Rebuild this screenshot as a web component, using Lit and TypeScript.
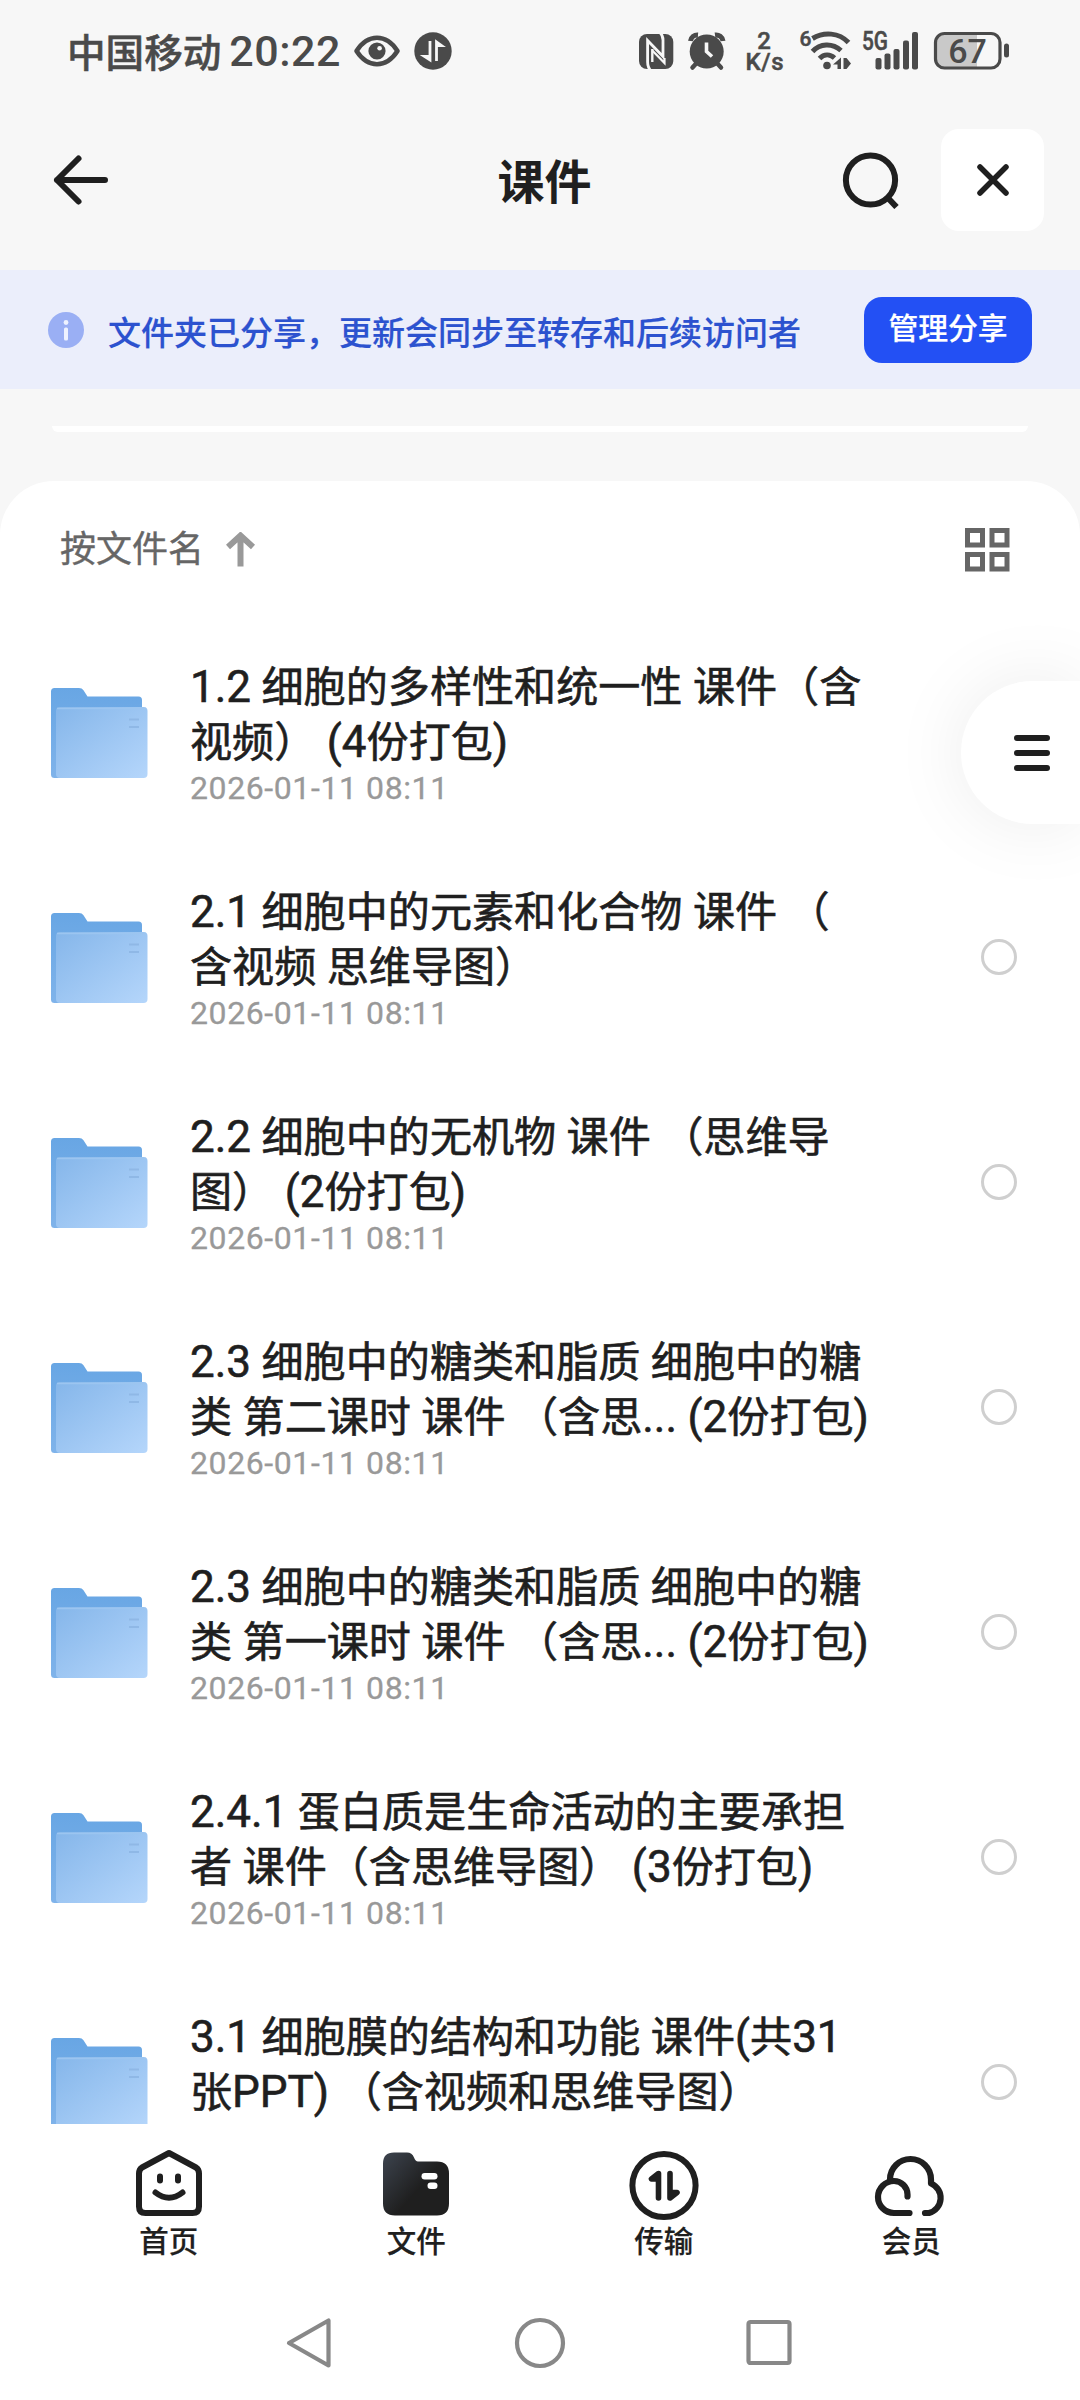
import { LitElement, html, svg, css } from "lit";
import { customElement, property } from "lit/decorators.js";

type Part = { t: string; latin?: boolean };
type FileItem = { lines: string[]; date?: string };

/** Splits a line so that runs of Latin letters and digits get their own size. */
function split(line: string): Part[] {
  return (line.match(/[\x21-\x7e]+|[^\x21-\x7e]+/g) ?? []).map((t) => ({
    t,
    latin: /[\x21-\x7e]/.test(t),
  }));
}

const day = "2026-01-11 08:11";
const files: FileItem[] = [
  { lines: ["1.2 细胞的多样性和统一性 课件（含", "视频） (4份打包)"], date: day },
  { lines: ["2.1 细胞中的元素和化合物 课件 （", "含视频 思维导图）"], date: day },
  { lines: ["2.2 细胞中的无机物 课件 （思维导", "图） (2份打包)"], date: day },
  { lines: ["2.3 细胞中的糖类和脂质 细胞中的糖", "类 第二课时 课件 （含思... (2份打包)"], date: day },
  { lines: ["2.3 细胞中的糖类和脂质 细胞中的糖", "类 第一课时 课件 （含思... (2份打包)"], date: day },
  { lines: ["2.4.1 蛋白质是生命活动的主要承担", "者 课件（含思维导图） (3份打包)"], date: day },
  { lines: ["3.1 细胞膜的结构和功能 课件(共31", "张PPT) （含视频和思维导图）"] },
];

const fontStack = css`Roboto, "Noto Sans CJK SC", sans-serif`;

@customElement("status-bar")
export class StatusBar extends LitElement {
  static styles = css`
    :host { display: flex; height: 102px; padding: 0 70px 0 67px; align-items: center; justify-content: space-between; color: #4a4a4a; font-family: ${fontStack}; box-sizing: border-box; }
    .side { display: flex; align-items: center; }
    svg { display: block; overflow: visible; }
    .carrier { font-size: 38.6px; font-weight: 500; line-height: 44px; font-family: "Noto Sans CJK SC", sans-serif; -webkit-text-stroke: 0.500px #4a4a4a; padding-bottom: 3px; }
    .clock { font-size: 43px; font-weight: 500; line-height: 44px; margin-left: 8px; letter-spacing: 0.5px; width: 125px; }
    .badge { margin-left: 14px; }
    text { font-family: ${fontStack}; fill: #4a4a4a; font-weight: 500; }
    .small { stroke: #4a4a4a; stroke-width: 0.500px; }
  `;
  render() {
    return html`
      <div class="side">
        <span class="carrier">中国移动</span>
        <span class="clock">20:22</span>
        <svg width="46" height="32" viewBox="0 0 46 32">
          <path d="M2.5 16C9 6 16 2.8 23 2.8S37 6 43.500 16C37 26 30 29.200 23 29.200S9 26 2.500 16Z" fill="none" stroke="#4a4a4a" stroke-width="4.600" stroke-linejoin="round"/>
          <circle cx="23" cy="16" r="8.600" fill="#4a4a4a"/><circle cx="25.600" cy="13.200" r="2.300" fill="#f7f7f7"/>
        </svg>
        <svg class="badge" width="38" height="38" viewBox="0 0 38 38">
          <circle cx="19" cy="19" r="18.700" fill="#4a4a4a"/>
          <path d="M16 9V28L10.500 24.500H16M22.500 29V10L27.500 13.500H22.500" fill="none" stroke="#f7f7f7" stroke-width="2.800"/>
        </svg>
      </div>
      <svg width="372" height="72" viewBox="638 15 372 72">
        <rect x="639" y="34" width="34.300" height="35" rx="8" fill="#4a4a4a"/>
        <path d="M651 71Q647.600 67.500 647.600 62V40.500L663 56.500V40Q663 35.500 660 32.500" fill="none" stroke="#f7f7f7" stroke-width="2.800"/>
        <path d="M652.300 49V62" fill="none" stroke="#f7f7f7" stroke-width="2.400"/>
        <path d="M652.300 50.500L664.500 63V58" fill="none" stroke="#f7f7f7" stroke-width="2.200"/>
        <path d="M690.500 41A7 7 0 0 1 698 35M715 35A7 7 0 0 1 723 41" fill="none" stroke="#4a4a4a" stroke-width="5"/>
        <circle cx="706.700" cy="51.500" r="17" fill="#4a4a4a"/>
        <path d="M698.500 61L692.500 67.500M715 61L721 67.500" stroke="#4a4a4a" stroke-width="4.500" stroke-linecap="round"/>
        <path d="M706.500 42.500V51.500L712 56.500" fill="none" stroke="#f7f7f7" stroke-width="3.600"/>
        <text class="small" x="764" y="49" font-size="24" text-anchor="middle">2</text>
        <text class="small" x="764.500" y="69.500" font-size="24" text-anchor="middle" textLength="38">K/s</text>
        <text class="small" x="799.500" y="46" font-size="21">6</text>
        <g fill="none" stroke="#4a4a4a" stroke-width="5">
          <path d="M812.500 38.500C824 31.500 839 32.500 848.500 42.500"/>
          <path d="M812.500 51.500C820 43.500 832 42.500 841 50.500"/>
          <path d="M819.500 58.500C824 54 830 54 834.500 58"/>
        </g>
        <circle cx="827" cy="65.500" r="3.800" fill="#4a4a4a"/>
        <path d="M833 64.500L841 57.500V69H837.500V64.500ZM843.500 58H846.500L851 63.500L846.500 69H843.500Z" fill="#4a4a4a"/>
        <text class="small" x="862" y="50" font-size="25" textLength="26" lengthAdjust="spacingAndGlyphs">5G</text>
        <g fill="#4a4a4a">
          <rect x="875.500" y="58" width="6" height="11.500" rx="2"/><rect x="884.500" y="53.500" width="6" height="16" rx="2"/>
          <rect x="893.500" y="49" width="6" height="20.500" rx="2"/><rect x="903" y="40.500" width="6" height="29" rx="2"/>
          <rect x="912" y="32" width="6" height="37.500" rx="2"/>
          <rect x="1004" y="43.500" width="5" height="14" rx="2.500"/>
        </g>
        <path d="M944 34H977V67H944A8 8 0 0 1 936 59V42A8 8 0 0 1 944 34Z" fill="#c9c9c9"/>
        <rect x="935.500" y="33.500" width="64.500" height="34.500" rx="9" fill="none" stroke="#4a4a4a" stroke-width="3.200"/>
        <text x="967.500" y="62.500" font-size="34" text-anchor="middle">67</text>
      </svg>`;
  }
}

@customElement("title-bar")
export class TitleBar extends LitElement {
  static styles = css`
    :host { display: grid; grid-template-columns: 1fr auto 1fr; align-items: center; height: 168px; padding: 0 36px 12px 52px; box-sizing: border-box; font-family: ${fontStack}; }
    svg { display: block; }
    .title { font-size: 47px; line-height: 60px; font-weight: 700; color: #1f1f1f; padding-right: 7px; padding-top: 6px; }
    .right { display: flex; justify-content: flex-end; align-items: center; gap: 41px; }
    .close { width: 103px; height: 102px; border-radius: 18px; background: #fff; display: flex; align-items: center; justify-content: center; }
  `;
  render() {
    return html`
      <svg width="58" height="52" viewBox="0 0 58 52"><path d="M26.500 4.500L5 26L26.500 47.500M5 26H53" fill="none" stroke="#1f1f1f" stroke-width="6" stroke-linecap="round" stroke-linejoin="round"/></svg>
      <div class="title">课件</div>
      <div class="right">
        <svg width="59" height="58" viewBox="0 0 59 58"><circle cx="29.500" cy="29" r="24.600" fill="none" stroke="#1f1f1f" stroke-width="6"/><path d="M46 46L55.500 56" stroke="#1f1f1f" stroke-width="6"/></svg>
        <div class="close"><svg width="34" height="34" viewBox="0 0 34 34"><path d="M4 4L30 30M30 4L4 30" stroke="#1f1f1f" stroke-width="5.500" stroke-linecap="round"/></svg></div>
      </div>`;
  }
}

@customElement("share-banner")
export class ShareBanner extends LitElement {
  static styles = css`
    :host { display: flex; align-items: center; height: 119px; padding: 0 48px; box-sizing: border-box; background: #ebeefb; font-family: ${fontStack}; }
    .note { flex: 1; margin-left: 24px; font-size: 33px; line-height: 40px; font-weight: 500; color: #2c52cf; padding-top: 8px; white-space: nowrap; -webkit-text-stroke: 0.200px #2c52cf; }
    .manage { width: 168px; height: 66px; border-radius: 18px; background: #2350f4; color: #fff; font-size: 29.800px; line-height: 63px; font-weight: 500; text-align: center; -webkit-text-stroke: 0.200px #fff; }
  `;
  render() {
    return html`
      <svg width="36" height="36" viewBox="0 0 36 36"><circle cx="18" cy="18" r="18" fill="#9aaff4"/><circle cx="18" cy="10.500" r="2.400" fill="#eef2ff"/><rect x="16" y="15.500" width="4" height="13" rx="1.500" fill="#eef2ff"/></svg>
      <div class="note">文件夹已分享，更新会同步至转存和后续访问者</div>
      <div class="manage">管理分享</div>`;
  }
}

@customElement("file-row")
export class FileRow extends LitElement {
  @property({ attribute: false }) item: FileItem = { lines: [] };
  static styles = css`
    :host { display: flex; align-items: center; height: 225px; padding: 0 63px 0 50px; box-sizing: border-box; flex: none; font-family: ${fontStack}; }
    .text { flex: 1; margin-left: 42px; padding-top: 2px; }
    .line { font-size: 42.100px; line-height: 54.500px; height: 54.500px; color: #1f1f1f; white-space: pre; -webkit-text-stroke: 0.600px #1f1f1f; }
    .latin { font-size: 44px; line-height: 1; }
    .date { height: 36px; font-size: 32px; line-height: 36px; color: #999; letter-spacing: 0.600px; -webkit-text-stroke: 0.300px #999; }
    .check { width: 36px; height: 36px; box-sizing: border-box; border: 3px solid #cfcfcf; border-radius: 50%; margin-bottom: 2px; }
  `;
  render() {
    return html`
      <svg width="98" height="92" viewBox="0 0 98 92">
        <defs>
          <linearGradient id="front" x1="0" y1="0" x2="1" y2="1"><stop offset="0" stop-color="#85b6ea"/><stop offset="1" stop-color="#b5d6fb"/></linearGradient>
          <linearGradient id="back" x1="0" y1="0" x2="0" y2="1"><stop offset="0" stop-color="#68a6e4"/><stop offset="1" stop-color="#7fb3ea"/></linearGradient>
        </defs>
        <path d="M4.500 1H29Q32 1 33.500 3.200L37.500 9.500H88.500Q92 9.500 92 13V84Q92 91 88 91H4.500Q1 91 1 87.500V4.500Q1 1 4.500 1Z" fill="url(#back)"/>
        <rect x="6" y="20" width="91.500" height="71" rx="4" fill="url(#front)"/>
        <path d="M7 21.500H96" stroke="#9cc5f0" stroke-width="1.400"/>
        <path d="M79 32.500H89M79 40H89" stroke="#8fb8e6" stroke-width="2"/>
      </svg>
      <div class="text">
        ${this.item.lines.map((l) => html`<div class="line">${split(l).map((p) => (p.latin ? html`<span class="latin">${p.t}</span>` : p.t))}</div>`)}
        <div class="date">${this.item.date}</div>
      </div>
      <div class="check"></div>`;
  }
}

@customElement("tab-bar")
export class TabBar extends LitElement {
  static styles = css`
    :host { display: grid; grid-template-columns: repeat(4, 1fr); padding: 0 45px; height: 150px; box-sizing: border-box; background: #fff; font-family: ${fontStack}; }
    .tab { display: flex; flex-direction: column; align-items: center; padding-top: 23px; }
    .label { font-size: 29.500px; line-height: 36px; font-weight: 500; color: #1f1f1f; margin-top: -1px; -webkit-text-stroke: 0.200px #1f1f1f; }
    svg { display: block; }
  `;
  private icons = [
    svg`<path d="M39 6L66 20.500Q69 22.500 69 26.500V59.500Q69 66 62.500 66H15.500Q9 66 9 59.500V26.500Q9 22.500 12 20.500Z" fill="none" stroke="#1f1f1f" stroke-width="6" stroke-linejoin="round"/>
      <path d="M30 29.500V33.500M48 29.500V33.500" stroke="#1f1f1f" stroke-width="6" stroke-linecap="round"/><path d="M25.500 45.500Q39 56 52.500 45.500" fill="none" stroke="#1f1f1f" stroke-width="6" stroke-linecap="round"/>`,
    svg`<defs><linearGradient id="dark" x1="0" y1="0" x2=".6" y2=".5"><stop offset="0" stop-color="#3d444f"/><stop offset="1" stop-color="#1f1f1f"/></linearGradient></defs>
      <path d="M17 5.500H30Q35 5.500 37 10.500Q38.500 14.500 41 14.500H60Q72 14.500 72 26.500V56.500Q72 68.500 60 68.500H18Q6 68.500 6 56.500V16.500Q6 5.500 17 5.500Z" fill="url(#dark)"/>
      <rect x="44.500" y="26" width="16" height="6.500" rx="3.250" fill="#fff"/><rect x="50.500" y="35.500" width="10" height="6.500" rx="3.250" fill="#fff"/>`,
    svg`<circle cx="39" cy="38.500" r="31.600" fill="none" stroke="#1f1f1f" stroke-width="6"/>
      <path d="M33.500 51V26.500L26.500 32H33.500M45 26.500V51L52 45.500H45" fill="none" stroke="#1f1f1f" stroke-width="5.600" stroke-linecap="round" stroke-linejoin="round"/>`,
    svg`<path d="M37.500 66H22A16 16 0 0 1 22 34A13.500 13.500 0 0 1 35.500 47.500V49.500M18 34V32.500A20.500 20.500 0 0 1 59 32.500V36.500A15.600 15.600 0 0 1 57 66H53" fill="none" stroke="#1f1f1f" stroke-width="6.200" stroke-linecap="round" stroke-linejoin="round"/>`,
  ];
  render() {
    return html`${["首页", "文件", "传输", "会员"].map(
      (name, i) => html`<div class="tab"><svg width="78" height="78" viewBox="0 0 78 78">${this.icons[i]}</svg><div class="label">${name}</div></div>`,
    )}`;
  }
}

@customElement("app-root")
export class AppRoot extends LitElement {
  static styles = css`
    :host { display: flex; flex-direction: column; height: 2400px; width: 1080px; background: #f7f7f7; overflow: hidden; position: relative; font-family: ${fontStack}; }
    svg { display: block; }
    .gap { height: 92px; padding: 37px 52px 0; box-sizing: border-box; }
    .edge { height: 6px; background: #fff; border-radius: 0 0 14px 14px; }
    .sheet { height: 1643px; background: #fff; border-radius: 54px 54px 0 0; overflow: hidden; display: flex; flex-direction: column; }
    .sort { flex: none; height: 139px; display: flex; align-items: center; justify-content: space-between; padding: 0 70px 1px 60px; box-sizing: border-box; }
    .by { display: flex; align-items: center; gap: 22px; font-size: 36px; line-height: 44px; color: #666; -webkit-text-stroke: 0.400px #666; }
    .quick { position: absolute; right: 0; top: 681px; width: 119px; height: 143px; border-radius: 72px 0 0 72px; background: #fff; box-shadow: 0 0 76px rgba(0, 0, 0, 0.080); display: flex; align-items: center; justify-content: center; box-sizing: border-box; padding-left: 23px; }
    .nav { flex: 1; background: #fff; display: grid; grid-template-columns: 230px 230px 230px; justify-content: center; justify-items: center; padding-top: 43px; }
  `;
  render() {
    return html`
      <status-bar></status-bar>
      <title-bar></title-bar>
      <share-banner></share-banner>
      <div class="gap"><div class="edge"></div></div>
      <div class="sheet">
        <div class="sort">
          <div class="by">按文件名
            <svg width="30" height="36" viewBox="0 0 30 36"><path d="M14.500 34.500V4M2 15L14.500 3.500L27 15" fill="none" stroke="#999" stroke-width="6"/></svg>
          </div>
          <svg width="45" height="44" viewBox="0 0 45 44"><g fill="none" stroke="#666" stroke-width="5"><rect x="2.500" y="2.500" width="15" height="14.500"/><rect x="27" y="2.500" width="15" height="14.500"/><rect x="2.500" y="26.500" width="15" height="14.500"/><rect x="27" y="26.500" width="15" height="14.500"/></g></svg>
        </div>
        ${files.map((f) => html`<file-row .item=${f}></file-row>`)}
      </div>
      <tab-bar></tab-bar>
      <div class="nav">
        <svg width="50" height="52" viewBox="0 0 50 52"><path d="M43.500 3.500V48.500L4 26Z" fill="none" stroke="#888" stroke-width="4.200" stroke-linejoin="round"/></svg>
        <svg width="52" height="52" viewBox="0 0 52 52"><circle cx="26" cy="26" r="23" fill="none" stroke="#888" stroke-width="4.200"/></svg>
        <svg width="52" height="52" viewBox="0 0 52 52"><rect x="4.500" y="5" width="41" height="41" rx="2" fill="none" stroke="#888" stroke-width="4.200"/></svg>
      </div>
      <div class="quick">
        <svg width="36" height="36" viewBox="0 0 36 36"><path d="M3 3H33M3 18H33M3 33H33" stroke="#1f1f1f" stroke-width="6" stroke-linecap="round"/></svg>
      </div>`;
  }
}
